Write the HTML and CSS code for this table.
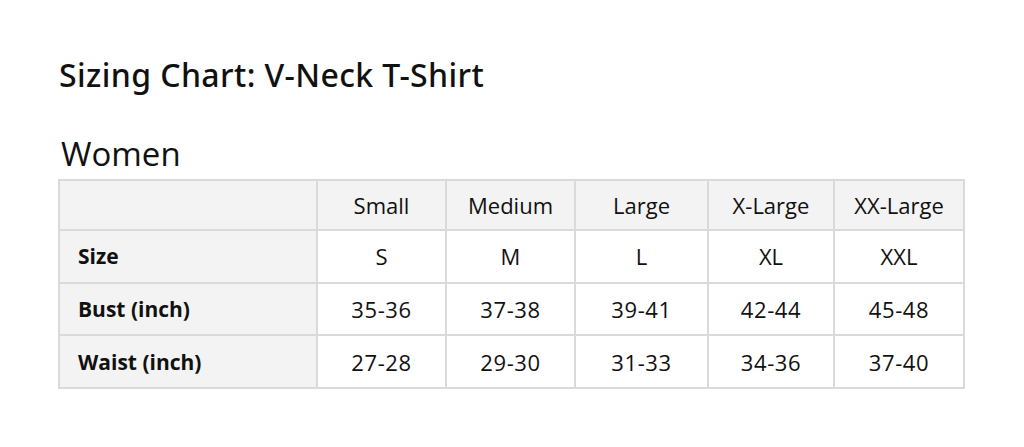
FILE: index.html
```html
<!DOCTYPE html>
<html>
<head>
<meta charset="utf-8">
<link rel="stylesheet" href="styles.css">
</head>
<body>
<div class="page">
  <h1 class="title">Sizing Chart: V-Neck T-Shirt</h1>
  <h2 class="section">Women</h2>
  <table class="chart">
    <colgroup>
      <col class="c0"><col class="c1"><col class="c2"><col class="c3"><col class="c4"><col class="c5">
    </colgroup>
    <tr class="head">
      <th></th><th>Small</th><th>Medium</th><th>Large</th><th>X-Large</th><th>XX-Large</th>
    </tr>
    <tr>
      <th class="label">Size</th><td>S</td><td>M</td><td>L</td><td>XL</td><td>XXL</td>
    </tr>
    <tr>
      <th class="label">Bust (inch)</th><td class="num">35-36</td><td class="num">37-38</td><td class="num">39-41</td><td class="num">42-44</td><td class="num">45-48</td>
    </tr>
    <tr>
      <th class="label">Waist (inch)</th><td class="num">27-28</td><td class="num">29-30</td><td class="num">31-33</td><td class="num">34-36</td><td class="num">37-40</td>
    </tr>
  </table>
</div>
</body>
</html>
```
FILE: styles.css
```css
html, body {
  margin: 0;
  padding: 0;
  background: #fff;
}
body {
  font-family: "Open Sans", "Noto Sans", sans-serif;
  color: #111;
}
.page {
  padding: 54px 0 0 58px;
}
.title {
  margin: 0 0 0 1px;
  font-family: "Noto Sans", "Open Sans", sans-serif;
  font-size: 32px;
  font-weight: 500;
  letter-spacing: 0.4px;
  line-height: 42px;
}
.section {
  margin: 36px 0 0 3px;
  font-size: 33px;
  font-weight: 400;
  line-height: 44px;
  height: 47px;
}
.chart {
  border-collapse: collapse;
  table-layout: fixed;
  width: 906px;
  font-size: 22px;
}
.c0 { width: 258px; }
.c1 { width: 129px; }
.c2 { width: 129px; }
.c3 { width: 133px; }
.c4 { width: 126px; }
.c5 { width: 130px; }
.chart th, .chart td {
  border: 2px solid #dadada;
  text-align: center;
  font-weight: 400;
  padding: 0;
  height: 48px;
}
.chart tr:not(.head) th, .chart tr:not(.head) td {
  height: 50.7px;
}
.chart tr.head th {
  background: #f3f3f3;
}
.chart th.label {
  background: #f3f3f3;
  text-align: left;
  font-weight: 700;
  font-size: 21px;
  padding-left: 18px;
}
.chart td {
  background: #fff;
}
.chart td.num {
  letter-spacing: 0.6px;
}
```
